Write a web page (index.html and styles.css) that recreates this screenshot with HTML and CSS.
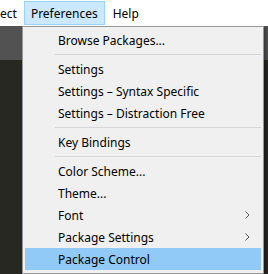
FILE: index.html
```html
<!DOCTYPE html>
<html lang="en">
<head>
    <meta charset="UTF-8">
    <title>Preferences menu</title>
    <link rel="stylesheet" href="styles.css">
</head>
<body>
<nav class="menubar">
    <span class="menu-title cut">ect</span>
    <span class="menu-title open">Preferences</span>
    <span class="menu-title">Help</span>
</nav>
<main class="workspace">
    <div class="tabbar"></div>
    <div class="editor"></div>

    <ul class="dropdown">
        <li class="item">Browse Packages...</li>
        <li class="sep"></li>
        <li class="item">Settings</li>
        <li class="item">Settings – Syntax Specific</li>
        <li class="item">Settings – Distraction Free</li>
        <li class="sep"></li>
        <li class="item">Key Bindings</li>
        <li class="sep"></li>
        <li class="item">Color Scheme...</li>
        <li class="item">Theme...</li>
        <li class="item sub">Font
            <svg class="arrow" width="5" height="8" viewBox="0 0 5 8"><path d="M0.5 0.5 L4 4 L0.5 7.5" fill="none" stroke="#555" stroke-width="1"/></svg>
        </li>
        <li class="item sub">Package Settings
            <svg class="arrow" width="5" height="8" viewBox="0 0 5 8"><path d="M0.5 0.5 L4 4 L0.5 7.5" fill="none" stroke="#555" stroke-width="1"/></svg>
        </li>
        <li class="item active">Package Control</li>
    </ul>
</main>
</body>
</html>
```

FILE: styles.css
```css
* {
    margin: 0;
    padding: 0;
    box-sizing: border-box;
}

html, body {
    height: 100%;
}

body {
    display: flex;
    flex-direction: column;
    background-color: #272822;
    font-family: "Noto Sans", "Noto Sans CJK SC", sans-serif;
    font-size: 12px;
    color: #000;
    overflow: hidden;
}

.menubar {
    display: flex;
    align-items: stretch;
    height: 26px;
    background-color: #fff;
    padding-top: 1px;
    padding-bottom: 1px;
}

.menu-title {
    display: flex;
    align-items: center;
    padding: 0 7px;
    border: 1px solid transparent;
}

.menu-title.cut {
    margin-left: -8px;
    padding-right: 6px;
}

.menu-title.open {
    background-color: #cce8ff;
    border-color: #99d1ff;
    padding: 0 6px;
}

.workspace {
    position: relative;
    flex: 1;
    display: flex;
    flex-direction: column;
}

.tabbar {
    height: 34px;
    background-color: #525252;
}

.editor {
    flex: 1;
    background-color: #272822;
}

.dropdown {
    position: absolute;
    top: 0;
    left: 22px;
    width: 242px;
    list-style: none;
    background-color: #f0f0f0;
    border: 1px solid #979797;
    padding: 2px 2px 3px;
    box-shadow: 2px 2px 3px rgba(0, 0, 0, .35);
}

.item {
    position: relative;
    display: flex;
    align-items: center;
    height: 22px;
    padding-left: 33px;
}

.item.active {
    background-color: #91c9f7;
}

.arrow {
    position: absolute;
    right: 11px;
    top: 7px;
}

.sep {
    height: 7px;
    margin: 0 0 0 30px;
    display: flex;
    align-items: center;
}

.sep::before {
    content: "";
    display: block;
    width: 100%;
    height: 1px;
    background-color: #d7d7d7;
}
```
